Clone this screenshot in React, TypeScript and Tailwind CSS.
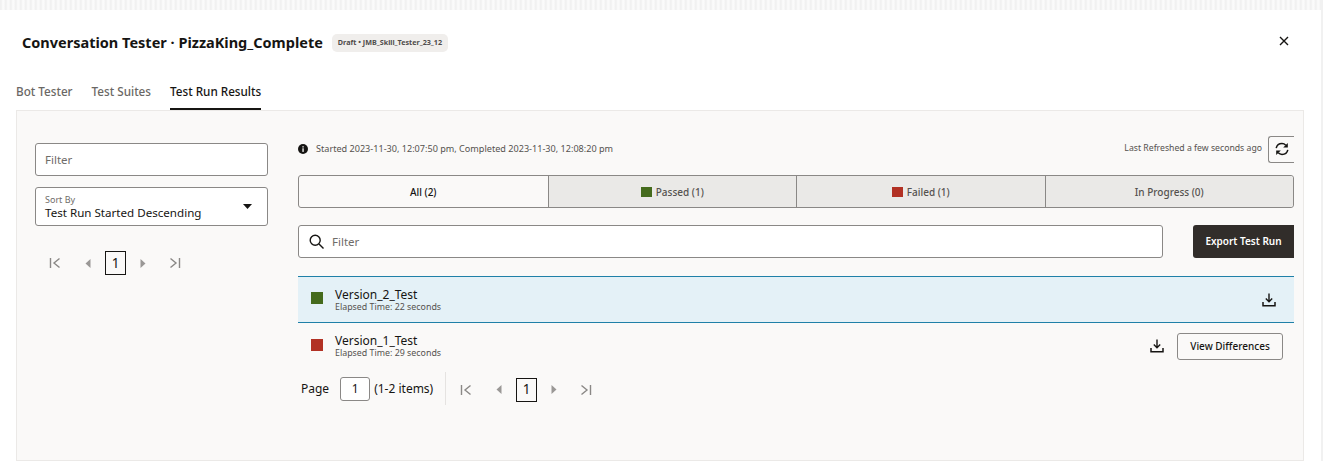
import React from "react";

function FirstIcon() {
  return (
    <svg width="12" height="12" viewBox="0 0 12 12" fill="none" stroke="#8a8886" strokeWidth="1.4">
      <path d="M1.5 1v10M10.5 1.5 5 6l5.5 4.5" />
    </svg>
  );
}
function LastIcon() {
  return (
    <svg width="12" height="12" viewBox="0 0 12 12" fill="none" stroke="#8a8886" strokeWidth="1.4">
      <path d="M10.5 1v10M1.5 1.5 7 6l-5.5 4.5" />
    </svg>
  );
}
function PrevIcon() {
  return (
    <svg width="6" height="9" viewBox="0 0 6 9" fill="#9a9896">
      <path d="M5.5 0v9L0.5 4.5z" />
    </svg>
  );
}
function NextIcon() {
  return (
    <svg width="6" height="9" viewBox="0 0 6 9" fill="#9a9896">
      <path d="M0.5 0v9L5.5 4.5z" />
    </svg>
  );
}
function Pager() {
  return (
    <div className="flex items-center">
      <div className="w-[24px] flex justify-center"><FirstIcon /></div>
      <div className="w-[24px] ml-[9px] flex justify-center"><PrevIcon /></div>
      <div className="w-[21px] h-[24px] ml-[5px] border border-[#161513] flex items-center justify-center text-[13.5px] text-[#161513]">1</div>
      <div className="w-[24px] ml-[5px] flex justify-center"><NextIcon /></div>
      <div className="w-[24px] ml-[8px] flex justify-center"><LastIcon /></div>
    </div>
  );
}
function DownloadIcon() {
  return (
    <svg width="14" height="14" viewBox="0 0 14 14" fill="none" stroke="#161513" strokeWidth="1.4">
      <path d="M7 0.5v8M3.8 5.6 7 8.8l3.2-3.2" />
      <path d="M1 9v3.8h12V9" strokeWidth="1.5" />
    </svg>
  );
}
function Square({ color, size }: { color: string; size: string }) {
  return <span className={size} style={{ backgroundColor: color }} />;
}

export default function App() {
  return (
    <div className="w-[1323px] h-[461px] overflow-hidden bg-white border-r-2 border-[#f1f1f1] flex flex-col text-[#161513] font-['Noto_Sans','Open_Sans',sans-serif]">
      <div className="h-[10px] shrink-0 bg-[#f4f4f4] bg-[repeating-linear-gradient(90deg,#f2f2f2_0px,#f0f0f0_1px,#fcfcfc_3px,#f5f5f5_5px)]" />
      <div className="h-[64px] shrink-0 flex items-center pl-[22px] pr-[32px] pt-[1px]">
        <h1 className="text-[14.5px] font-bold whitespace-nowrap leading-none">Conversation Tester · PizzaKing_Complete</h1>
        <span className="ml-[9px] h-[18px] px-[6px] rounded-[5px] bg-[#f0eeec] text-[#4f4c4a] text-[7.2px] font-bold flex items-center whitespace-nowrap">Draft • JMB_Skill_Tester_23_12</span>
        <svg className="ml-auto mb-[3px]" width="10" height="10" viewBox="0 0 10 10" stroke="#161513" strokeWidth="1.4">
          <path d="M1 1l8 8M9 1l-8 8" />
        </svg>
      </div>
      <div className="flex pl-[16px] gap-[19px] h-[36px] shrink-0 text-[11.7px] font-medium leading-none">
        <div className="pt-[12px] text-[#6a6764]">Bot Tester</div>
        <div className="pt-[12px] text-[#6a6764]">Test Suites</div>
        <div className="pt-[12px] h-[36px] border-b-2 border-[#161513]">Test Run Results</div>
      </div>
      <div className="flex-1 ml-[16px] mr-[17px] border border-[#ebe9e7] bg-[#faf9f8] flex pl-[18px] pr-[9px] pt-[24px]">
        <div className="w-[233px] shrink-0 pt-[8px]">
          <div className="h-[33px] bg-white border border-[#8a8886] rounded-[3px] flex items-center pl-[9px] text-[11.5px] text-[#6f6c69]">Filter</div>
          <div className="h-[39px] mt-[11px] bg-white border border-[#8a8886] rounded-[3px] pl-[9px] pr-[15px] flex items-center justify-between">
            <div>
              <div className="text-[9px] leading-[11px] text-[#6f6c69] mt-[1px]">Sort By</div>
              <div className="text-[11.6px] leading-[15px] whitespace-nowrap">Test Run Started Descending</div>
            </div>
            <svg width="9" height="5" viewBox="0 0 9 5" fill="#161513"><path d="M0 0h9L4.5 5z" /></svg>
          </div>
          <div className="mt-[25px] ml-[8px]"><Pager /></div>
        </div>
        <div className="flex-1 ml-[30px] min-w-0">
          <div className="h-[28px] flex items-center">
            <svg width="10" height="10" viewBox="0 0 10 10">
              <circle cx="5" cy="5" r="5" fill="#161513" />
              <rect x="4.4" y="4.3" width="1.3" height="3.6" fill="#fff" />
              <rect x="4.4" y="2.2" width="1.3" height="1.3" fill="#fff" />
            </svg>
            <span className="ml-[8px] text-[9.1px] text-[#55524f] whitespace-nowrap">Started 2023-11-30, 12:07:50 pm, Completed 2023-11-30, 12:08:20 pm</span>
            <span className="ml-auto text-[8.7px] text-[#55524f] whitespace-nowrap">Last Refreshed a few seconds ago</span>
            <div className="ml-[6px] w-[26px] h-[27px] border-y border-l border-[#8a8886] rounded-l-[3px] flex items-center justify-center">
              <svg width="14" height="14" viewBox="0 0 14 14" fill="none" stroke="#161513" strokeWidth="1.5">
                <path d="M1.2 6.2C1.8 3.4 4 1.6 7 1.6c1.6 0 2.8.6 3.8 1.6" />
                <path d="M12.8 1v4.6H8.2z" fill="#161513" stroke="none" />
                <path d="M12.8 7.8C12.2 10.6 10 12.4 7 12.4c-1.6 0-2.8-.6-3.8-1.6" />
                <path d="M1.2 13V8.4h4.6z" fill="#161513" stroke="none" />
              </svg>
            </div>
          </div>
          <div className="mt-[12px] h-[33px] grid grid-cols-4 border border-[#8a8886] rounded-[3px] text-[10px] font-medium leading-none">
            <div className="flex items-center justify-center">All (2)</div>
            <div className="flex items-center justify-center gap-[4px] bg-[#eae9e7] border-l border-[#8a8886] text-[#55524f]">
              <Square color="#456b1d" size="w-[11px] h-[10px]" />Passed (1)
            </div>
            <div className="flex items-center justify-center gap-[4px] bg-[#eae9e7] border-l border-[#8a8886] text-[#55524f]">
              <Square color="#b23124" size="w-[11px] h-[10px]" />Failed (1)
            </div>
            <div className="flex items-center justify-center bg-[#eae9e7] border-l border-[#8a8886] text-[#55524f] rounded-r-[3px]">In Progress (0)</div>
          </div>
          <div className="mt-[17px] flex">
            <div className="w-[865px] h-[33px] bg-white border border-[#8a8886] rounded-[3px] flex items-center pl-[10px]">
              <svg width="15" height="15" viewBox="0 0 15 15" fill="none" stroke="#161513" strokeWidth="1.4">
                <circle cx="6.2" cy="6.2" r="5" />
                <path d="M10 10l4.5 4.5" />
              </svg>
              <span className="ml-[8px] text-[11.5px] text-[#6f6c69]">Filter</span>
            </div>
            <div className="ml-auto w-[101px] h-[33px] bg-[#312d2a] text-white rounded-l-[3px] text-[10px] font-semibold flex items-center justify-center">Export Test Run</div>
          </div>
          <div className="mt-[18px] h-[47px] bg-[#e4f1f7] border-y border-[#1f80a8] flex items-center pl-[13px] pr-[18px]">
            <Square color="#456b1d" size="w-[12px] h-[12px] shrink-0 mb-[3px]" />
            <div className="ml-[12px] mt-[1px]">
              <div className="text-[12px] leading-[14px]">Version_2_Test</div>
              <div className="text-[8.85px] leading-[11px] text-[#55524f]">Elapsed Time: 22 seconds</div>
            </div>
            <div className="ml-auto"><DownloadIcon /></div>
          </div>
          <div className="h-[46px] flex items-center pl-[13px] pr-[11px]">
            <Square color="#b23124" size="w-[12px] h-[12px] shrink-0 mb-[3px]" />
            <div className="ml-[12px] mt-[1px]">
              <div className="text-[12px] leading-[14px]">Version_1_Test</div>
              <div className="text-[8.85px] leading-[11px] text-[#55524f]">Elapsed Time: 29 seconds</div>
            </div>
            <div className="ml-auto"><DownloadIcon /></div>
            <div className="ml-[13px] w-[106px] h-[27px] border border-[#8a8886] rounded-[3px] text-[10px] font-medium flex items-center justify-center">View Differences</div>
          </div>
          <div className="mt-[3px] flex items-center h-[33px] pl-[3px] text-[12px]">
            <span className="mt-[1px]">Page</span>
            <div className="ml-[11px] mt-[1px] w-[30px] h-[24px] bg-white border border-[#8a8886] rounded-[3px] flex items-center justify-center">1</div>
            <span className="ml-[4px] mt-[1px]">(1-2 items)</span>
            <div className="ml-[12px] w-px h-[33px] bg-[#e5e3e1]" />
            <div className="ml-[8px] mt-[2px]"><Pager /></div>
          </div>
        </div>
      </div>
    </div>
  );
}
